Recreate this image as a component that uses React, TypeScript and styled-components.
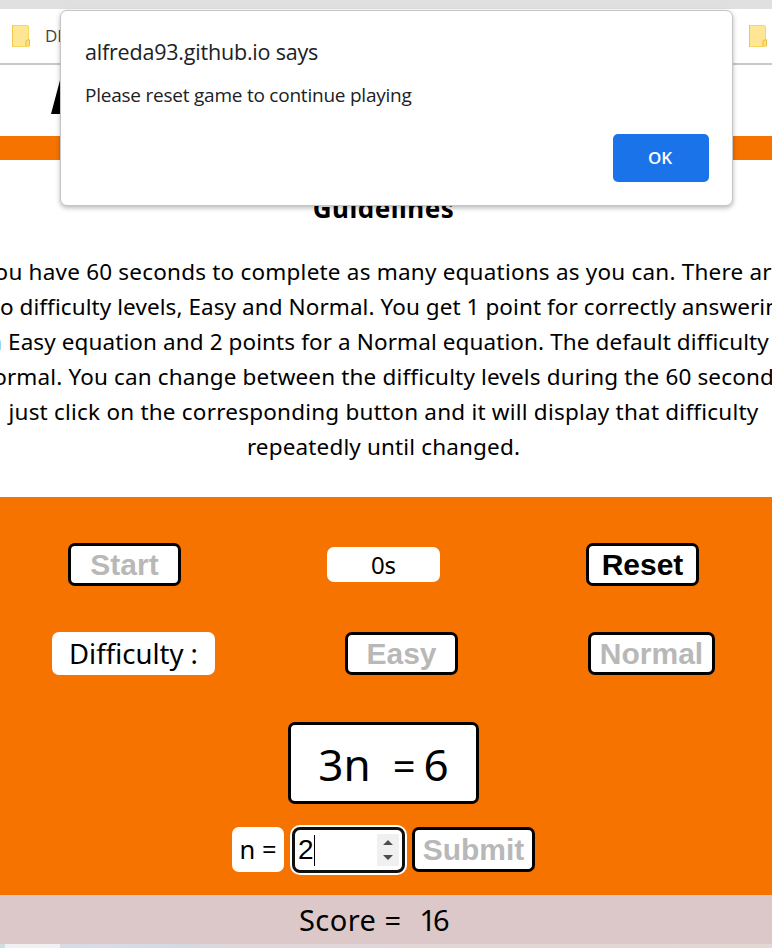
import React from 'react';
import styled, { createGlobalStyle } from 'styled-components';

const GlobalStyle = createGlobalStyle`
  * { box-sizing: border-box; }
  body { margin: 0; background: #fff; }
`;

const orange = '#f77300';
const gameFont = '"Noto Sans", sans-serif';
const dialogFont = '"Open Sans", sans-serif';

const Page = styled.div`
  position: relative;
  width: 772px;
  height: 948px;
  overflow: hidden;
  display: flex;
  flex-direction: column;
  color: #000;
  font-family: ${gameFont};
`;

const ToolbarEdge = styled.div`
  height: 9px;
  background: #e0e0e0;
`;

const Bookmarks = styled.div`
  height: 56px;
  padding: 0 5px 0 12px;
  display: flex;
  align-items: center;
  border-bottom: 2px solid #c8c8c8;
`;

const BookmarkLabel = styled.span`
  flex: 1;
  margin-left: 15px;
  font: 400 17px/24px ${dialogFont};
  color: #444;
`;

const FolderSvg = styled.svg`
  display: block;
  flex: none;
`;

const Banner = styled.header`
  height: 71px;
  padding: 0 0 22px 51px;
  display: flex;
  align-items: flex-end;
`;

const OrangeRule = styled.div`
  height: 24px;
  background: ${orange};
`;

const Guidelines = styled.section`
  height: 337px;
  padding-top: 30px;
  display: flex;
  flex-direction: column;
  align-items: center;
  padding-right: 5px;
`;

const Heading = styled.h2`
  margin: 0 0 28px;
  font-size: 26px;
  line-height: 36px;
  font-weight: 700;
  letter-spacing: 0.5px;
`;

const Line = styled.span<{ $track: number }>`
  font-size: 22.5px;
  line-height: 35px;
  white-space: nowrap;
  letter-spacing: ${(p) => p.$track}px;
`;

const Game = styled.main`
  height: 398px;
  padding-top: 46px;
  display: flex;
  flex-direction: column;
  background: ${orange};
`;

const Row = styled.div<{ $left: number; $gap: number; $bottom: number; $align?: string }>`
  display: flex;
  align-items: ${(p) => p.$align ?? 'center'};
  padding-left: ${(p) => p.$left}px;
  gap: ${(p) => p.$gap}px;
  margin-bottom: ${(p) => p.$bottom}px;
`;

const Button = styled.button<{ $width: number; $height?: number }>`
  width: ${(p) => p.$width}px;
  height: ${(p) => p.$height ?? 43}px;
  padding: 0;
  display: flex;
  align-items: center;
  justify-content: center;
  border: 3px solid #000;
  border-radius: 7px;
  background: #fff;
  color: #000;
  font: 700 30px/36px "Liberation Sans", Arial, sans-serif;
  &:disabled { color: #b8b8b8; }
`;

const Label = styled.div<{ $width: number; $height: number; $size: number }>`
  width: ${(p) => p.$width}px;
  height: ${(p) => p.$height}px;
  display: flex;
  align-items: center;
  justify-content: center;
  border-radius: 7px;
  background: #fff;
  font-size: ${(p) => p.$size}px;
  line-height: 1;
  white-space: pre;
`;

const Equation = styled.div`
  align-self: center;
  width: 191px;
  height: 82px;
  margin: 0 5px 23px 0;
  padding-top: 1px;
  display: flex;
  align-items: center;
  justify-content: center;
  border: 3px solid #000;
  border-radius: 7px;
  background: #fff;
  font-size: 44px;
  line-height: 1;
`;

const Equals = styled.span`
  margin: 4px 8px 0 22px;
  font-size: 40px;
`;

const Answer = styled.div`
  width: 113px;
  height: 46px;
  margin: 0 7px 0 8px;
  padding: 0 3px 0 3px;
  display: flex;
  align-items: center;
  border: 3px solid #101010;
  border-radius: 8px;
  background: #fff;
  box-shadow: 0 0 0 2px #fff;
  font: 28px/32px "Liberation Sans", Arial, sans-serif;
`;

const Caret = styled.span`
  width: 1px;
  height: 31px;
  background: #000;
`;

const Spinner = styled.div`
  width: 22px;
  height: 32px;
  margin-left: auto;
  background: #f0f0f0;
`;

const Score = styled.footer`
  height: 49px;
  padding-left: 299px;
  display: flex;
  align-items: center;
  background: #dcc8c8;
  font-size: 29px;
  line-height: 49px;
  letter-spacing: 0.45px;
`;

const Points = styled.span`
  margin-left: 18px;
  letter-spacing: -3px;
`;

const Taskbar = styled.div`
  height: 4px;
  padding-left: 5px;
  background: linear-gradient(90deg, #d3dce2 0, #dadbe7 100px, #d3dae2 180px, #e1d6da 240px, #e4d7d2 100%);
`;

const TaskbarSearch = styled.div`
  width: 55px;
  height: 4px;
  background: #f1f1f3;
`;

const Dialog = styled.div`
  position: absolute;
  left: 60px;
  top: 10px;
  width: 673px;
  height: 196px;
  padding: 26px 23px 23px 24px;
  display: flex;
  flex-direction: column;
  align-items: flex-start;
  border: 1px solid #c3c5c6;
  border-radius: 7px;
  background: #fff;
  box-shadow: 0 2px 5px rgba(0, 0, 0, 0.28);
  font-family: ${dialogFont};
  color: #202124;
`;

const DialogTitle = styled.div`
  font-size: 21.5px;
  line-height: 30px;
  letter-spacing: -0.2px;
  white-space: nowrap;
`;

const DialogText = styled.div`
  margin-top: 15px;
  font-size: 19px;
  line-height: 26px;
  letter-spacing: -0.23px;
  white-space: nowrap;
`;

const OkButton = styled.button`
  width: 96px;
  height: 48px;
  margin: auto 0 0 auto;
  padding: 0 2px 0 0;
  border: 0;
  border-radius: 5px;
  background: #1a73e8;
  color: #fff;
  font: 600 17px/48px ${dialogFont};
`;

const Folder = () => (
  <FolderSvg width="18" height="22" viewBox="0 0 18 22">
    <path d="M.5.5h15q1 0 1 1v13h1v6q0 1-1 1H.5z" fill="#ffe694" stroke="#f9d65c" />
    <path d="M.5 0v22" stroke="#efc94c" />
    <path d="M14 21v-5q0-1 1.5-1h2v6" fill="#ffe07a" stroke="#e8bd3c" />
  </FolderSvg>
);

const guidelines = [
  { text: 'You have 60 seconds to complete as many equations as you can. There are', track: 0.21 },
  { text: 'two difficulty levels, Easy and Normal. You get 1 point for correctly answering', track: 0.075 },
  { text: 'an Easy equation and 2 points for a Normal equation. The default difficulty is', track: 0.1 },
  { text: 'Normal. You can change between the difficulty levels during the 60 seconds,', track: 0.154 },
  { text: 'just click on the corresponding button and it will display that difficulty', track: 0.216 },
  { text: 'repeatedly until changed.', track: 0.15 },
];

export default function App() {
  return (
    <Page>
      <GlobalStyle />
      <ToolbarEdge />
      <Bookmarks>
        <Folder />
        <BookmarkLabel>DE</BookmarkLabel>
        <Folder />
      </Bookmarks>
      <Banner>
        <svg width="40" height="45" viewBox="0 0 40 45">
          <path d="M0 45 12 0h14l13 45H29l-3-10H11l-2 10z" />
        </svg>
      </Banner>
      <OrangeRule />
      <Guidelines>
        <Heading>Guidelines</Heading>
        {guidelines.map((l) => (
          <Line key={l.text} $track={l.track}>{l.text}</Line>
        ))}
      </Guidelines>
      <Game>
        <Row $left={68} $gap={146} $bottom={46}>
          <Button $width={113} disabled>Start</Button>
          <Label $width={113} $height={35} $size={24}>0s</Label>
          <Button $width={113}>Reset</Button>
        </Row>
        <Row $left={52} $gap={130} $bottom={47}>
          <Label $width={163} $height={43} $size={27.5}>Difficulty :</Label>
          <Button $width={113} disabled>Easy</Button>
          <Button $width={127} disabled>Normal</Button>
        </Row>
        <Equation>
          3n<Equals>=</Equals>6
        </Equation>
        <Row $left={232} $gap={0} $bottom={0} $align="flex-start">
          <Label $width={52} $height={45} $size={25.5}>n =</Label>
          <Answer>
            2<Caret />
            <Spinner>
              <svg width="22" height="32" viewBox="0 0 22 32">
                <path d="M6 11l5-5 5 5zM6 21l5 5 5-5z" fill="#4d4d4d" />
              </svg>
            </Spinner>
          </Answer>
          <Button $width={123} $height={45} disabled>Submit</Button>
        </Row>
      </Game>
      <Score>
        Score =<Points>16</Points>
      </Score>
      <Taskbar>
        <TaskbarSearch />
      </Taskbar>
      <Dialog>
        <DialogTitle>alfreda93.github.io says</DialogTitle>
        <DialogText>Please reset game to continue playing</DialogText>
        <OkButton>OK</OkButton>
      </Dialog>
    </Page>
  );
}
